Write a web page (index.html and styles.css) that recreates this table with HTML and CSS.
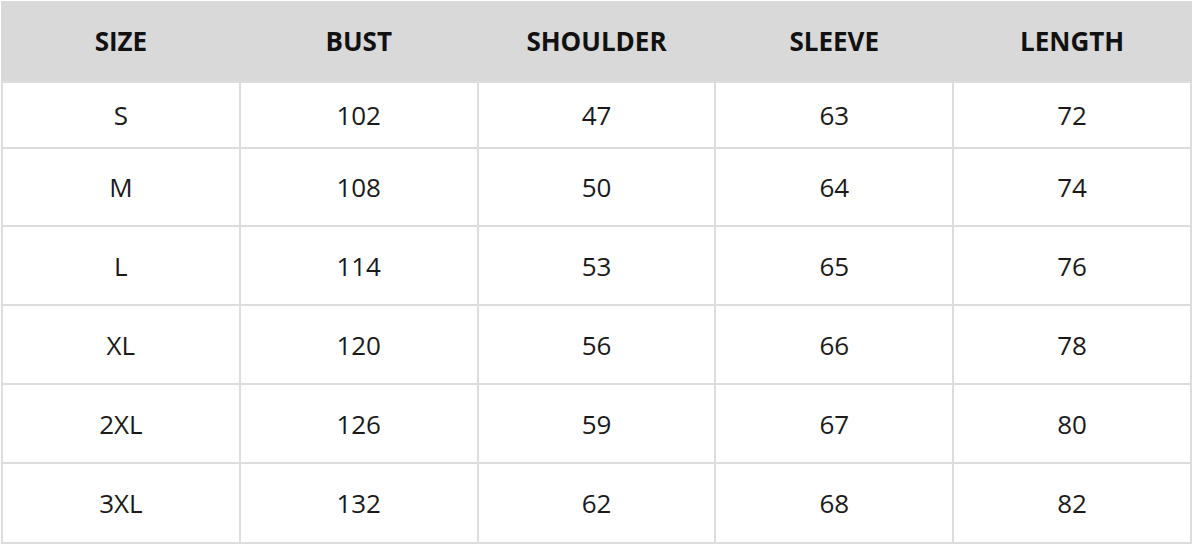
FILE: index.html
```html
<!DOCTYPE html>
<html>
<head>
<meta charset="utf-8">
<link rel="stylesheet" href="styles.css">
</head>
<body>
<table class="size-table">
  <thead>
    <tr class="head-row">
      <th>SIZE</th><th>BUST</th><th>SHOULDER</th><th>SLEEVE</th><th>LENGTH</th>
    </tr>
  </thead>
  <tbody>
    <tr class="row-first"><td>S</td><td>102</td><td>47</td><td>63</td><td>72</td></tr>
    <tr class="row-second"><td>M</td><td>108</td><td>50</td><td>64</td><td>74</td></tr>
    <tr class="row"><td>L</td><td>114</td><td>53</td><td>65</td><td>76</td></tr>
    <tr class="row"><td>XL</td><td>120</td><td>56</td><td>66</td><td>78</td></tr>
    <tr class="row"><td>2XL</td><td>126</td><td>59</td><td>67</td><td>80</td></tr>
    <tr class="row-last"><td>3XL</td><td>132</td><td>62</td><td>68</td><td>82</td></tr>
  </tbody>
</table>
</body>
</html>
```
FILE: styles.css
```css
html, body {
  margin: 0;
  padding: 0;
  background: #ffffff;
}
.size-table {
  width: 1191px;
  border-collapse: collapse;
  table-layout: fixed;
  font-family: "Open Sans", "Liberation Sans", sans-serif;
  font-size: 26px;
  color: #1a1a1a;
  margin-left: 1px;
  margin-top: 1px;
}
.size-table th,
.size-table td {
  border: 2px solid #dddddd;
  text-align: center;
  vertical-align: middle;
  padding: 0;
}
.size-table th {
  background: #d9d9d9;
  border-color: #d9d9d9;
  font-weight: 700;
  height: 76px;
  color: #111111;
  padding-bottom: 2px;
}
.head-row th {
  border-bottom-color: #dddddd;
}
.row-first td {
  height: 64px;
}
.row-second td {
  height: 76px;
}
.row td {
  height: 77px;
}
.row-last td {
  height: 78px;
}
```
